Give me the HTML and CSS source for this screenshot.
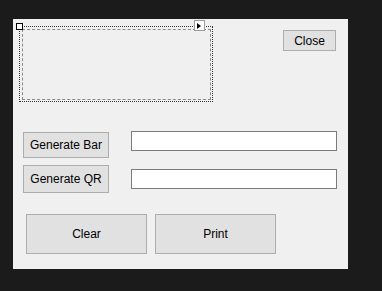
FILE: index.html
```html
<!DOCTYPE html>
<html>
<head>
<meta charset="utf-8">
<link rel="stylesheet" href="styles.css">
</head>
<body>
<div class="form">
  <div class="top-row">
    <div class="picture">
      <span class="grip"></span>
      <span class="smart-tag"><span class="tri"></span></span>
      <div class="picture-inner"></div>
    </div>
    <button class="btn btn-close">Close</button>
  </div>
  <div class="row row-bar">
    <button class="btn btn-gen btn-bar">Generate Bar</button>
    <input class="field" type="text">
  </div>
  <div class="row row-qr">
    <button class="btn btn-gen btn-qr">Generate QR</button>
    <input class="field field-qr" type="text">
  </div>
  <div class="bottom-row">
    <button class="btn btn-big">Clear</button>
    <button class="btn btn-big">Print</button>
  </div>
</div>
</body>
</html>
```
FILE: styles.css
```css
html, body {
  margin: 0;
  padding: 0;
  background: #1b1b1b;
  width: 382px;
  height: 291px;
  overflow: hidden;
}
* { box-sizing: border-box; }
.form {
  margin: 19px 0 0 13px;
  width: 335px;
  height: 250px;
  background: #f0f0f0;
  padding-top: 7px;
  font-family: "Liberation Sans", Arial, sans-serif;
  font-size: 12px;
  color: #000;
}
.top-row {
  display: flex;
  align-items: flex-start;
  padding-left: 6px;
  height: 76px;
}
.picture {
  position: relative;
  width: 194px;
  height: 76px;
  border: 1px dotted #333;
  padding: 2px 1px 1px 2px;
}
.picture-inner {
  width: 100%;
  height: 100%;
  border: 1px dashed #8a8a8a;
}
.grip {
  position: absolute;
  left: -4px;
  top: -4px;
  width: 7px;
  height: 7px;
  background: #fff;
  border: 1px solid #000;
}
.smart-tag {
  position: absolute;
  left: 174px;
  top: -7px;
  width: 11px;
  height: 11px;
  background: #fff;
  border: 1px solid #9a9a9a;
  display: flex;
  align-items: center;
  padding-left: 2px;
}
.tri {
  width: 0;
  height: 0;
  border-top: 3.5px solid transparent;
  border-bottom: 3.5px solid transparent;
  border-left: 4px solid #000;
}
.btn {
  font-family: inherit;
  font-size: 12px;
  color: #000;
  background: #e1e1e1;
  border: 1px solid #adadad;
  border-radius: 0;
  padding: 0;
  margin: 0;
  text-align: center;
  line-height: 1;
}
.btn-close {
  width: 53px;
  height: 21px;
  margin-left: 70px;
  margin-top: 4px;
}
.row {
  display: flex;
  align-items: flex-start;
  padding-left: 10px;
  gap: 22px;
}
.row-bar { margin-top: 29px; }
.row-qr { margin-top: 7px; }
.btn-gen { width: 86px; }
.btn-bar { height: 26px; margin-top: 1px; }
.btn-qr { height: 28px; }
.field {
  width: 206px;
  height: 20px;
  border: 1px solid #7a7a7a;
  background: #fff;
  margin: 0;
  padding: 0 3px;
  outline: none;
}
.field-qr { margin-top: 4px; }
.bottom-row {
  display: flex;
  gap: 8px;
  padding-left: 13px;
  margin-top: 21px;
}
.btn-big {
  width: 121px;
  height: 40px;
}
```
